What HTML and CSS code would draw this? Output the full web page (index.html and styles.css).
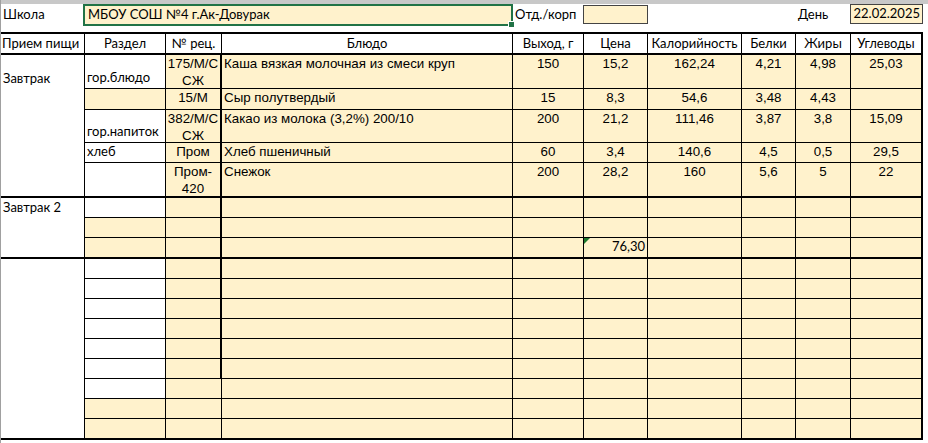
FILE: index.html
```html
<!DOCTYPE html>
<html lang="ru">
<head>
<meta charset="utf-8">
<title>Меню</title>
<link rel="stylesheet" href="styles.css">
</head>
<body>
<div class="strip"></div>
<div class="info">
  <div class="i-label">Школа</div>
  <div class="i-school">МБОУ СОШ №4 г.Ак-Довурак</div>
  <div class="i-label">Отд./корп</div>
  <div class="i-box"></div>
  <div></div>
  <div></div>
  <div class="i-label">День</div>
  <div class="i-box i-date">22.02.2025</div>
</div>
<div class="sheet">
  <!-- header -->
  <div class="c hd hl">Прием пищи</div>
  <div class="c hd">Раздел</div>
  <div class="c hd">№ рец.</div>
  <div class="c hd">Блюдо</div>
  <div class="c hd">Выход, г</div>
  <div class="c hd">Цена</div>
  <div class="c hd">Калорийность</div>
  <div class="c hd">Белки</div>
  <div class="c hd">Жиры</div>
  <div class="c hd">Углеводы</div>

  <!-- Завтрак -->
  <div class="c nb bot">Завтрак</div>
  <div class="c bot">гор.блюдо</div>
  <div class="c y tr ar ctr">175/М/С<br>СЖ</div>
  <div class="c y ar">Каша вязкая молочная из смеси круп</div>
  <div class="c y ar ctr">150</div>
  <div class="c y ar ctr">15,2</div>
  <div class="c y ar ctr">162,24</div>
  <div class="c y ar ctr">4,21</div>
  <div class="c y ar ctr">4,98</div>
  <div class="c y ar ctr">25,03</div>

  <div class="c nb"></div>
  <div class="c y"></div>
  <div class="c y tr ar ctr">15/М</div>
  <div class="c y ar">Сыр полутвердый</div>
  <div class="c y ar ctr">15</div>
  <div class="c y ar ctr">8,3</div>
  <div class="c y ar ctr">54,6</div>
  <div class="c y ar ctr">3,48</div>
  <div class="c y ar ctr">4,43</div>
  <div class="c y"></div>

  <div class="c nb"></div>
  <div class="c bot">гор.напиток</div>
  <div class="c y tr ar ctr">382/М/С<br>СЖ</div>
  <div class="c y ar">Какао из молока (3,2%) 200/10</div>
  <div class="c y ar ctr">200</div>
  <div class="c y ar ctr">21,2</div>
  <div class="c y ar ctr">111,46</div>
  <div class="c y ar ctr">3,87</div>
  <div class="c y ar ctr">3,8</div>
  <div class="c y ar ctr">15,09</div>

  <div class="c nb"></div>
  <div class="c bot">хлеб</div>
  <div class="c y tr ar ctr">Пром</div>
  <div class="c y ar">Хлеб пшеничный</div>
  <div class="c y ar ctr">60</div>
  <div class="c y ar ctr">3,4</div>
  <div class="c y ar ctr">140,6</div>
  <div class="c y ar ctr">4,5</div>
  <div class="c y ar ctr">0,5</div>
  <div class="c y ar ctr">29,5</div>

  <div class="c tb"></div>
  <div class="c tb"></div>
  <div class="c y tb tr ar ctr">Пром-<br>420</div>
  <div class="c y tb ar">Снежок</div>
  <div class="c y tb ar ctr">200</div>
  <div class="c y tb ar ctr">28,2</div>
  <div class="c y tb ar ctr">160</div>
  <div class="c y tb ar ctr">5,6</div>
  <div class="c y tb ar ctr">5</div>
  <div class="c y tb ar ctr">22</div>

  <!-- Завтрак 2 -->
  <div class="c nb bot">Завтрак 2</div>
  <div class="c"></div>
  <div class="c y tr"></div>
  <div class="c y"></div>
  <div class="c y"></div>
  <div class="c y"></div>
  <div class="c y"></div>
  <div class="c y"></div>
  <div class="c y"></div>
  <div class="c y"></div>

  <div class="c nb"></div>
  <div class="c y"></div>
  <div class="c y tr"></div>
  <div class="c y"></div>
  <div class="c y"></div>
  <div class="c y"></div>
  <div class="c y"></div>
  <div class="c y"></div>
  <div class="c y"></div>
  <div class="c y"></div>

  <div class="c tb"></div>
  <div class="c y tb"></div>
  <div class="c y tb tr"></div>
  <div class="c y tb"></div>
  <div class="c y tb"></div>
  <div class="c y tb bot rt flag">76,30</div>
  <div class="c y tb"></div>
  <div class="c y tb"></div>
  <div class="c y tb"></div>
  <div class="c y tb"></div>

  <!-- пустой блок -->
  <div class="c nb"></div>
  <div class="c"></div>
  <div class="c y tr"></div>
  <div class="c y"></div><div class="c y"></div><div class="c y"></div><div class="c y"></div><div class="c y"></div><div class="c y"></div><div class="c y"></div>

  <div class="c nb"></div>
  <div class="c"></div>
  <div class="c y tr"></div>
  <div class="c y"></div><div class="c y"></div><div class="c y"></div><div class="c y"></div><div class="c y"></div><div class="c y"></div><div class="c y"></div>

  <div class="c nb"></div>
  <div class="c"></div>
  <div class="c y tr"></div>
  <div class="c y"></div><div class="c y"></div><div class="c y"></div><div class="c y"></div><div class="c y"></div><div class="c y"></div><div class="c y"></div>

  <div class="c nb"></div>
  <div class="c"></div>
  <div class="c y tr"></div>
  <div class="c y"></div><div class="c y"></div><div class="c y"></div><div class="c y"></div><div class="c y"></div><div class="c y"></div><div class="c y"></div>

  <div class="c nb"></div>
  <div class="c"></div>
  <div class="c y tr"></div>
  <div class="c y"></div><div class="c y"></div><div class="c y"></div><div class="c y"></div><div class="c y"></div><div class="c y"></div><div class="c y"></div>

  <div class="c nb"></div>
  <div class="c"></div>
  <div class="c y tr"></div>
  <div class="c y"></div><div class="c y"></div><div class="c y"></div><div class="c y"></div><div class="c y"></div><div class="c y"></div><div class="c y"></div>

  <div class="c nb"></div>
  <div class="c"></div>
  <div class="c y"></div>
  <div class="c y"></div><div class="c y"></div><div class="c y"></div><div class="c y"></div><div class="c y"></div><div class="c y"></div><div class="c y"></div>

  <div class="c nb"></div>
  <div class="c y"></div>
  <div class="c y"></div>
  <div class="c y"></div><div class="c y"></div><div class="c y"></div><div class="c y"></div><div class="c y"></div><div class="c y"></div><div class="c y"></div>

  <div class="c tb"></div>
  <div class="c y tb"></div>
  <div class="c y tb"></div>
  <div class="c y tb"></div><div class="c y tb"></div><div class="c y tb"></div><div class="c y tb"></div><div class="c y tb"></div><div class="c y tb"></div><div class="c y tb"></div>
</div>
</body>
</html>
```
FILE: styles.css
```css
html, body {
  margin: 0;
  padding: 0;
  background: #ffffff;
}
body {
  border-left: 1px solid #a0a0a0;
  min-height: 443px;
  box-sizing: border-box;
  font-family: Lato, "Open Sans", "Noto Sans", sans-serif;
  font-size: 13px;
  line-height: 17px;
  color: #000;
}
.strip {
  height: 4px;
  background: #c8c8c8;
}
.info {
  display: grid;
  grid-template-columns: 84px 81px 56px 291px 71px 64px 94px 54px 55px 72px;
  height: 20px;
  margin-bottom: 8px;
  width: 922px;
}
.i-label {
  display: flex;
  align-items: flex-end;
  padding: 0 0 1px 2px;
  white-space: nowrap;
}
.i-school {
  grid-column: 2 / 5;
  margin-left: -2px;
  margin-bottom: -2px;
  border: 2px solid #217346;
  background: #fff2cc;
  position: relative;
  display: flex;
  align-items: flex-end;
  padding: 0 0 1px 3px;
  white-space: nowrap;
}
.i-school::after {
  content: "";
  position: absolute;
  right: -4px;
  bottom: -4px;
  width: 5px;
  height: 5px;
  background: #217346;
  border: 1px solid #fff;
}
.i-box {
  margin-left: -1px;
  margin-top: 1px;
  border: 1px solid #444;
  background: #fff2cc;
}
.i-date {
  grid-column: 10;
  margin-top: 0;
  display: flex;
  align-items: flex-end;
  justify-content: flex-end;
  padding: 0 2px 1px 0;
}
.sheet {
  display: grid;
  width: 922px;
  grid-template-columns: 84px 81px 56px 291px 71px 64px 94px 54px 55px 72px;
  grid-template-rows: 21px 34px 21px 33px 20px 35px 20px 20px 21px 20px 20px 20px 20px 20px 20px 20px 20px 21px;
  border-top: 2px solid #000;
}
.c {
  box-sizing: border-box;
  border-right: 1px solid #000;
  border-bottom: 1px solid #000;
  padding: 0 2px;
  display: flex;
  align-items: flex-start;
  white-space: nowrap;
  overflow: hidden;
  background: #fff;
  position: relative;
}
.c:nth-child(10n) {
  border-right-width: 2px;
}
.y { background: #fff2cc; }
.nb { border-bottom-width: 0; }
.tb { border-bottom-width: 2px; }
.tr { border-right-width: 2px; }
.hd {
  border-bottom-width: 2px;
  align-items: center;
  justify-content: center;
  padding: 0;
}
.hl { justify-content: flex-start; padding-left: 1px; }
.bot {
  align-items: flex-end;
  padding-bottom: 2px;
}
.rt { justify-content: flex-end; }
.ar {
  font-family: "Liberation Sans", Arial, sans-serif;
  font-size: 13.33px;
  line-height: 17px;
}
.ctr {
  justify-content: center;
  text-align: center;
  padding: 0;
}
.flag::before {
  content: "";
  position: absolute;
  left: 0;
  top: 0;
  width: 0;
  height: 0;
  border-top: 6px solid #1d7a2e;
  border-right: 6px solid transparent;
}
```
